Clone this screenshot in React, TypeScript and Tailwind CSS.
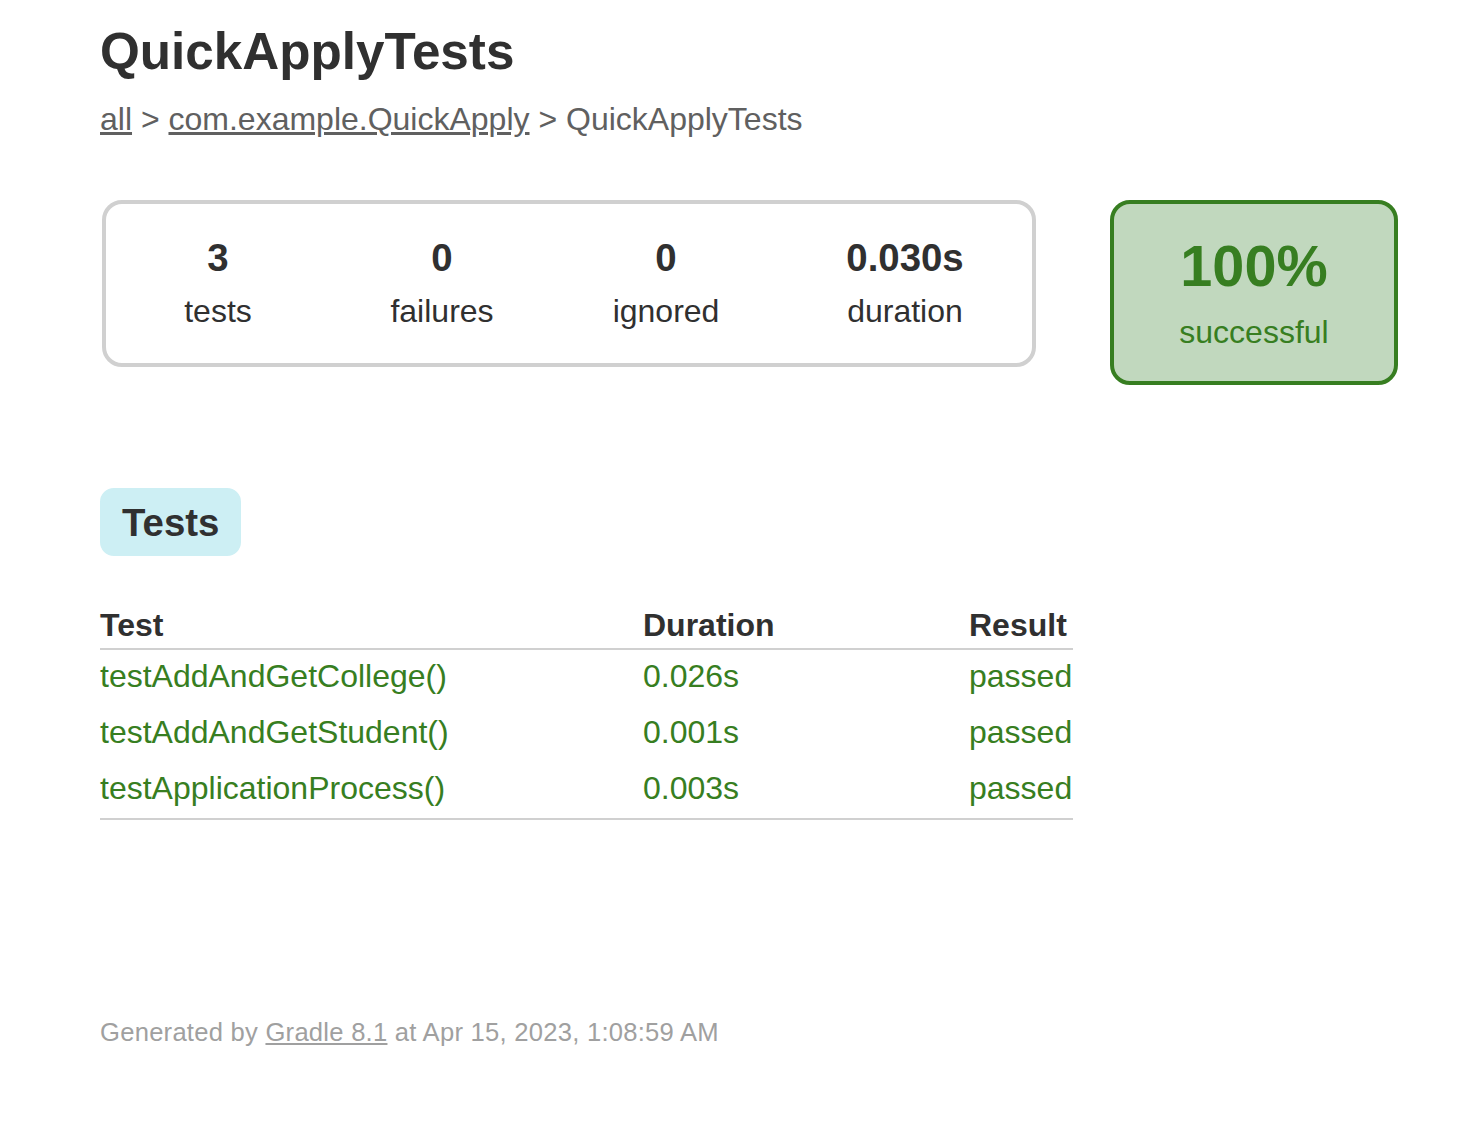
import React from 'react';

const tests = [
  { name: 'testAddAndGetCollege()', duration: '0.026s', result: 'passed' },
  { name: 'testAddAndGetStudent()', duration: '0.001s', result: 'passed' },
  { name: 'testApplicationProcess()', duration: '0.003s', result: 'passed' },
];

const counters = [
  { value: '3', label: 'tests', width: 'w-[224px]' },
  { value: '0', label: 'failures', width: 'w-[224px]' },
  { value: '0', label: 'ignored', width: 'w-[224px]' },
  { value: '0.030s', label: 'duration', width: 'w-[254px]' },
];

export default function App() {
  return (
    <div className="min-h-screen bg-white px-[100px] pt-[22px] text-[#303030] font-['Liberation_Sans',Arial,sans-serif]">
      {/* Header */}
      <h1 className="text-[51.2px] font-bold leading-[59px] whitespace-nowrap">QuickApplyTests</h1>
      <div className="mt-[20px] text-[32px] leading-[37px] text-[#606060] whitespace-nowrap">
        <a href="#" className="underline">all</a> &gt;{' '}
        <a href="#" className="underline">com.example.QuickApply</a> &gt; QuickApplyTests
      </div>

      {/* Summary */}
      <div className="mt-[62px] flex items-start pl-[2px]">
        <div className="flex shrink-0 border-4 border-[#d0d0d0] rounded-[20px]">
          {counters.map((c) => (
            <div key={c.label} className={`${c.width} pt-[32px] pb-[33px] text-center`}>
              <div className="text-[38.4px] font-bold leading-[44px] mb-[13px]">{c.value}</div>
              <div className="text-[32px] leading-[37px]">{c.label}</div>
            </div>
          ))}
        </div>
        <div className="ml-[74px] w-[288px] shrink-0 border-4 border-[#377e21] bg-[#c1d8be] rounded-[20px] pt-[29px] pb-[30px] text-center text-[#377e21]">
          <div className="text-[57.6px] font-bold leading-[66px] mb-[15px]">100%</div>
          <div className="text-[32px] leading-[37px]">successful</div>
        </div>
      </div>

      {/* Tabs */}
      <div className="mt-[103px] w-fit border-2 border-[#cdeff4] bg-[#cdeff4] rounded-[14px] px-[20px] pt-[11px] pb-[9px]">
        <h2 className="text-[38.4px] font-bold leading-[44px]">Tests</h2>
      </div>

      {/* Test table */}
      <div className="mt-[47px] w-[973px] border-b-2 border-[#d0d0d0] text-[32px]">
        <div className="grid grid-cols-[543px_326px_104px] pt-[4px] pb-[4px] leading-[37px] font-bold border-b-2 border-[#d0d0d0] whitespace-nowrap">
          <div>Test</div>
          <div>Duration</div>
          <div>Result</div>
        </div>
        {tests.map((t) => (
          <div key={t.name} className="grid grid-cols-[543px_326px_104px] pt-[8px] pb-[11px] leading-[37px] text-[#377e21] whitespace-nowrap">
            <div>{t.name}</div>
            <div>{t.duration}</div>
            <div>{t.result}</div>
          </div>
        ))}
      </div>

      {/* Footer */}
      <div className="mt-[198px] pb-[60px] text-[25.6px] leading-[29px] tracking-[0.25px] text-[#a0a0a0] whitespace-nowrap">
        Generated by <a href="#" className="underline">Gradle 8.1</a> at Apr 15, 2023, 1:08:59 AM
      </div>
    </div>
  );
}
